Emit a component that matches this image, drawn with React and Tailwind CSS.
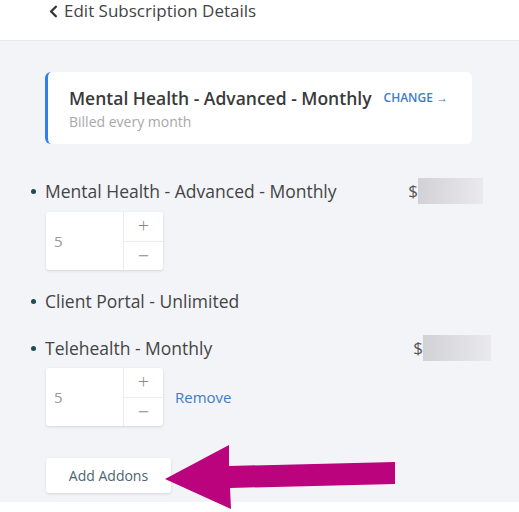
import React from 'react';
import { ChevronLeft } from 'lucide-react';

const font = { fontFamily: '"Open Sans", "Noto Sans", sans-serif' };

const Stepper = () => (
  <div className="flex w-[117px] h-[58px] bg-white rounded-[3px] shadow-[0_1px_3px_rgba(0,0,0,0.12)]">
    <div className="w-[78px] flex items-center pl-[8px] text-[15px] text-[#9a9a9a] border-r border-[#ececec]">5</div>
    <div className="flex-1 flex flex-col">
      <button className="flex-1 flex items-center justify-center text-[20px] font-light leading-none text-[#8a8a8a] border-b border-[#ececec]">+</button>
      <button className="flex-1 flex items-center justify-center text-[20px] font-light leading-none text-[#8a8a8a]">−</button>
    </div>
  </div>
);

const Item = ({ label }) => (
  <div className="flex items-center h-[22px] text-[17.5px] text-[#444]">
    <span className="w-[5px] h-[5px] rounded-full bg-[#1c4d57] ml-[31px] mr-[9px]" />
    <span>{label}</span>
  </div>
);

const Price = ({ right, boxW }) => (
  <div className="flex items-center" style={{ marginRight: right }}>
    <span className="text-[17px] text-[#555]">$</span>
    <div className="h-[26px] bg-gradient-to-r from-[#d2d2d6] to-[#e9e9ee]" style={{ width: boxW }} />
  </div>
);

export default function App() {
  return (
    <div className="relative w-[519px] h-[512px] bg-white overflow-hidden" style={font}>
      <header className="h-[41px] bg-white border-b border-[#e6e8ee] flex items-start pl-[44px]">
        <ChevronLeft className="w-[19px] h-[19px] text-[#333] mt-[2px]" strokeWidth={3} />
        <span className="text-[17px] leading-[22px] text-[#444] ml-[1px]">Edit Subscription Details</span>
      </header>

      <main className="bg-[#f3f4f8] h-[461px] pt-[31px]">
        <div className="ml-[45px] w-[427px] h-[72px] bg-white rounded-md border-l-[3px] border-[#2f80ed] pl-[21px] pt-[13px]">
          <div className="flex items-center">
            <span className="text-[17.5px] font-semibold text-[#3a3a3a]">Mental Health - Advanced - Monthly</span>
            <span className="ml-[12px] text-[12px] font-semibold text-[#3d7cc9]">CHANGE →</span>
          </div>
          <div className="text-[14px] text-[#a8a8a8]">Billed every month</div>
        </div>

        <div className="mt-[34px] flex items-center justify-between">
          <Item label="Mental Health - Advanced - Monthly" />
          <Price right={36} boxW={65} />
        </div>
        <div className="mt-[8px] ml-[46px]">
          <Stepper />
        </div>

        <div className="mt-[20px]">
          <Item label="Client Portal - Unlimited" />
        </div>

        <div className="mt-[23px] flex items-center justify-between">
          <Item label="Telehealth - Monthly" />
          <Price right={28} boxW={68} />
        </div>
        <div className="mt-[7px] ml-[46px] flex items-center gap-[12px]">
          <Stepper />
          <span className="text-[15px] text-[#3d7cc9]">Remove</span>
        </div>

        <button className="mt-[32px] ml-[46px] w-[125px] h-[35px] bg-white rounded-[3px] shadow-[0_1px_3px_rgba(0,0,0,0.12)] text-[14px] text-[#4b6670]">
          Add Addons
        </button>
      </main>

      <svg className="absolute left-0 top-0" width="519" height="512" viewBox="0 0 519 512">
        <polygon
          points="165,479 229,445 229,466 395,462 395,484 230,488 231,509"
          fill="#ba037c"
        />
      </svg>
    </div>
  );
}
